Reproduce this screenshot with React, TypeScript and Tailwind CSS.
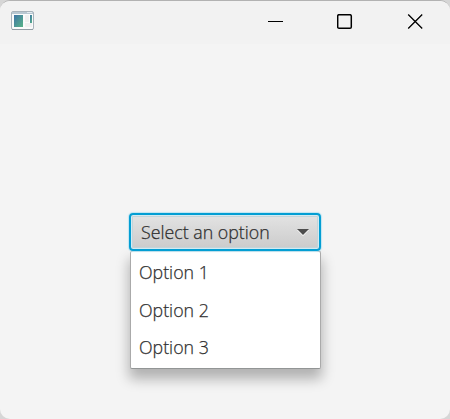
import React from "react";

const options = ["Option 1", "Option 2", "Option 3"];

function AppIcon() {
  return (
    <svg width="24" height="20" viewBox="0 0 24 20" aria-hidden="true">
      <defs>
        <linearGradient id="pane" x1="0" y1="0" x2="1" y2="1">
          <stop offset="0" stopColor="#3f74a5" />
          <stop offset="1" stopColor="#58b488" />
        </linearGradient>
      </defs>
      <rect x="1.5" y="0.5" width="22" height="18" rx="1.5" fill="#fafbfb" stroke="#a9b3bb" />
      <rect x="2" y="1" width="21" height="2" fill="#b9c8d2" />
      <rect x="17" y="1" width="5" height="1" fill="#e4ebef" />
      <rect x="4" y="4" width="9" height="12" fill="url(#pane)" />
      <rect x="15" y="4" width="4" height="7" fill="#f0f0f0" />
      <rect x="15" y="12" width="7" height="4" fill="#f0f0f0" />
      <rect x="20" y="4" width="2" height="8" fill="url(#pane)" />
      <path d="M2 18.5H23" stroke="#929da5" />
    </svg>
  );
}

function TitleBar() {
  return (
    <header className="flex h-[43px] items-start justify-between bg-[#f2f2f2] pl-[10px] pr-[27px] pt-[10px]">
      <AppIcon />
      <div className="flex gap-[54px] pt-[3px]">
        <svg width="16" height="16" viewBox="0 0 16 16" aria-label="Minimize">
          <path d="M1 7.5H16" stroke="#000" />
        </svg>
        <svg width="16" height="16" viewBox="0 0 16 16" aria-label="Maximize">
          <rect x="0.7" y="0.7" width="13.6" height="13.6" rx="1.3" fill="none" stroke="#000" strokeWidth="1.5" />
        </svg>
        <svg width="16" height="16" viewBox="0 0 16 16" aria-label="Close">
          <path d="M1.2 0.5L15.2 14.5M15.2 0.5L1.2 14.5" stroke="#000" strokeWidth="1.35" />
        </svg>
      </div>
    </header>
  );
}

export default function App() {
  return (
    <div className="h-[419px] w-[450px] overflow-hidden bg-[#d6d6d6] font-['Open_Sans','Noto_Sans',sans-serif] text-[#2b2b2b]">
      <div className="h-full overflow-hidden rounded-[10px] border-t border-[#b2b2b2] bg-[#f4f4f4]">
        <TitleBar />
        <main className="ml-[129px] w-[192px] pt-[169px]">
          <div className="relative z-10 flex h-[38px] items-center justify-between rounded-[4px] border-2 border-[#039ed3] bg-linear-to-b from-[#e3e3e3] to-[#cbcbcb] pl-[10px] pr-[10px] shadow-[0_0_1px_1px_#bfe5f2,inset_0_0_0_1px_#d4eaf1,inset_0_0_0_2px_#c3d4da]">
            <span className="whitespace-nowrap text-[17.8px] font-light leading-6 [-webkit-text-stroke:0.25px_#333]">Select an option</span>
            <svg width="12" height="8" viewBox="0 0 12 8" aria-hidden="true">
              <path d="M0 2H12L6 8Z" fill="#fff" />
              <path d="M0 1H12L6 7Z" fill="#4d4d4d" />
            </svg>
          </div>
          <ul className="ml-px flex h-[118px] flex-col rounded-[2px] border border-[#aaa] border-b-[#929595] bg-white pt-[1.5px] shadow-[0_9px_13px_1px_rgba(0,0,0,0.28)]">
            {options.map((option) => (
              <li key={option} className="flex h-[37.5px] items-center pl-[8px] text-[17.8px] font-light leading-6 [-webkit-text-stroke:0.25px_#333]">
                {option}
              </li>
            ))}
          </ul>
        </main>
      </div>
    </div>
  );
}
